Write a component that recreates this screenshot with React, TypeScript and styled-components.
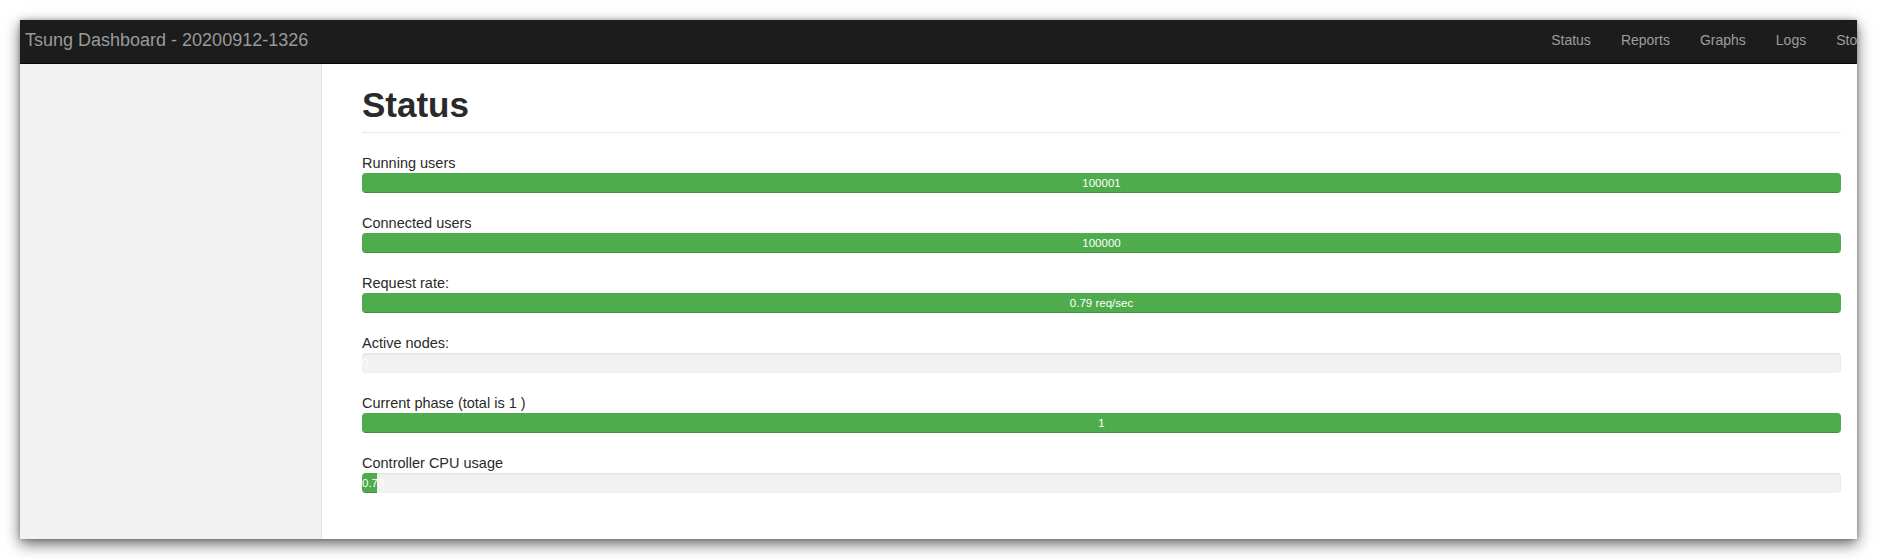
import React from "react";
import styled, { createGlobalStyle } from "styled-components";

const GlobalStyle = createGlobalStyle`
  html, body {
    margin: 0;
    padding: 0;
    background: #ffffff;
  }
  body {
    font-family: "Liberation Sans", Arial, Helvetica, sans-serif;
    color: #333333;
  }
  * { box-sizing: border-box; }
`;

const Page = styled.div`
  padding: 20px;
  width: 1877px;
  height: 559px;
`;

const Window = styled.div`
  width: 1837px;
  height: 519px;
  overflow: hidden;
  background: #ffffff;
  display: flex;
  flex-direction: column;
  box-shadow: 0 5px 14px rgba(0, 0, 0, 0.6), 0 0 4px rgba(0, 0, 0, 0.25);
`;

const Navbar = styled.nav`
  flex: 0 0 44px;
  height: 44px;
  background: #1c1c1c;
  border-bottom: 1px solid #080808;
  overflow: hidden;
`;

const NavInner = styled.div`
  width: calc(100% + 23px);
  height: 100%;
  display: flex;
  align-items: center;
  justify-content: space-between;
  padding-left: 5px;
`;

const Brand = styled.a`
  font-size: 18px;
  line-height: 24px;
  color: #9a9a9a;
  text-decoration: none;
  white-space: nowrap;
  padding-bottom: 4px;
`;

const NavList = styled.ul`
  list-style: none;
  margin: 0;
  padding: 0;
  display: flex;
  height: 100%;
  align-items: center;
`;

const NavLink = styled.li`
  font-size: 14px;
  line-height: 20px;
  padding: 0 15px 4px;
  color: #9d9d9d;
  white-space: nowrap;
`;

const Body = styled.div`
  flex: 1;
  display: flex;
  min-height: 0;
`;

const Sidebar = styled.aside`
  flex: 0 0 302px;
  background: #f2f2f2;
  border-right: 1px solid #e3e3e3;
`;

const Main = styled.main`
  flex: 1;
  padding: 20px 16px 0 40px;
`;

const Title = styled.h1`
  margin: 0;
  font-size: 35px;
  line-height: 42px;
  font-weight: bold;
  color: #2a2a2a;
  padding-bottom: 6px;
  border-bottom: 1px solid #e8e8e8;
  margin-bottom: 20px;
`;

const Metric = styled.section`
  margin-bottom: 20px;
`;

const Label = styled.div`
  font-size: 14.5px;
  line-height: 20px;
  color: #2a2a2a;
`;

const Progress = styled.div`
  height: 20px;
  background: #f1f1f1;
  border-radius: 4px;
  box-shadow: inset 0 1px 2px rgba(0, 0, 0, 0.08);
  overflow: hidden;
  display: flex;
`;

const Bar = styled.div`
  height: 100%;
  background: #4fac4c;
  box-shadow: inset 0 -1px 0 rgba(0, 0, 0, 0.15);
  color: #ffffff;
  font-size: 11.5px;
  line-height: 20px;
  text-align: center;
  white-space: nowrap;
  flex: 0 0 auto;
`;

type MetricData = { label: string; text: string; pct: number };

const metrics: MetricData[] = [
  { label: "Running users", text: "100001", pct: 100 },
  { label: "Connected users", text: "100000", pct: 100 },
  { label: "Request rate:", text: "0.79 req/sec", pct: 100 },
  { label: "Active nodes:", text: "0", pct: 0 },
  { label: "Current phase (total is 1 )", text: "1", pct: 100 },
  { label: "Controller CPU usage", text: "0.73", pct: 1 },
];

const links = ["Status", "Reports", "Graphs", "Logs", "Stop"];

export default function App() {
  return (
    <>
      <GlobalStyle />
      <Page>
        <Window>
          <Navbar>
            <NavInner>
              <Brand>Tsung Dashboard - 20200912-1326</Brand>
              <NavList>
                {links.map((l) => (
                  <NavLink key={l}>{l}</NavLink>
                ))}
              </NavList>
            </NavInner>
          </Navbar>
          <Body>
            <Sidebar />
            <Main>
              <Title>Status</Title>
              {metrics.map((m) => (
                <Metric key={m.label}>
                  <Label>{m.label}</Label>
                  <Progress>
                    <Bar style={{ width: `${m.pct}%` }}>{m.text}</Bar>
                  </Progress>
                </Metric>
              ))}
            </Main>
          </Body>
        </Window>
      </Page>
    </>
  );
}
